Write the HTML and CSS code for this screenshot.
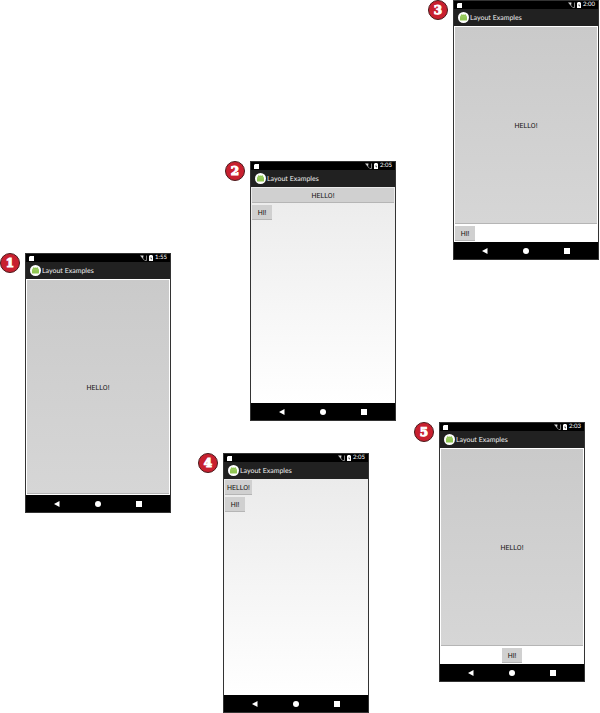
FILE: index.html
```
<!DOCTYPE html>
<html lang="en">
<head>
<meta charset="utf-8">
<title>Layout Examples</title>
<link rel="stylesheet" href="styles.css">
</head>
<body>
<svg class="sprite" aria-hidden="true">
  <symbol id="sd" viewBox="0 0 5 5"><path d="M1 0H5V5H0V1Z" fill="#fff"/></symbol>
  <symbol id="signal" viewBox="0 0 7 6"><path d="M0 .5H3.5L3 3.5Z" fill="#ddd"/><path d="M1 1L4.500 5.500M6.500 .5V5.500H5" fill="none" stroke="#bbb" stroke-width=".7"/></symbol>
  <symbol id="battery" viewBox="0 0 4 6"><path d="M1 0H3V.5H4V6H0V.5H1Z" fill="#fff"/><path d="M2.200 1.500L1.200 3.500H2V5L3 3H2.200Z" fill="#333"/></symbol>
  <symbol id="app" viewBox="0 0 11 11"><circle cx="5.5" cy="5.5" r="5.5" fill="#fff"/><path d="M2 7.700V5.200Q2.200 2.500 5.500 2.500T9 5.200V7.700Q9 8.600 8.200 8.600H2.800Q2 8.600 2 7.700Z" fill="#91c653"/><path d="M3.200 2L4 3.200M7.800 2L7 3.200" stroke="#91c653" stroke-width=".6"/><path d="M2.200 4.800H8.800" stroke="#b4d98a" stroke-width=".4"/></symbol>
  <symbol id="back" viewBox="0 0 6 6"><path d="M0 3L5.500 0V6Z" fill="#fff"/></symbol>
  <symbol id="home" viewBox="0 0 6 6"><circle cx="3" cy="3" r="3" fill="#fff"/></symbol>
  <symbol id="recent" viewBox="0 0 6 6"><path d="M0 0H6V6H0Z" fill="#fff"/></symbol>
</svg>
<main class="board">
  <div class="column column-first">
    <section class="example">
      <span class="badge">1</span>
      <div class="phone">
        <div class="status"><svg class="sd"><use href="#sd"/></svg><svg class="signal"><use href="#signal"/></svg><svg class="battery"><use href="#battery"/></svg><span>1:55</span></div>
        <header class="appbar"><svg class="app"><use href="#app"/></svg><span>Layout Examples</span></header>
        <div class="content"><button class="fill">HELLO!</button></div>
        <nav class="nav"><button aria-label="Back"><svg><use href="#back"/></svg></button><button aria-label="Home"><svg><use href="#home"/></svg></button><button aria-label="Recent"><svg><use href="#recent"/></svg></button></nav>
      </div>
    </section>
  </div>
  <div class="column column-middle">
    <section class="example to-end">
      <span class="badge">2</span>
      <div class="phone">
        <div class="status"><svg class="sd"><use href="#sd"/></svg><svg class="signal"><use href="#signal"/></svg><svg class="battery"><use href="#battery"/></svg><span>2:05</span></div>
        <header class="appbar"><svg class="app"><use href="#app"/></svg><span>Layout Examples</span></header>
        <div class="content shaded"><button class="wide">HELLO!</button><button>HI!</button></div>
        <nav class="nav"><button aria-label="Back"><svg><use href="#back"/></svg></button><button aria-label="Home"><svg><use href="#home"/></svg></button><button aria-label="Recent"><svg><use href="#recent"/></svg></button></nav>
      </div>
    </section>
    <section class="example">
      <span class="badge">4</span>
      <div class="phone">
        <div class="status"><svg class="sd"><use href="#sd"/></svg><svg class="signal"><use href="#signal"/></svg><svg class="battery"><use href="#battery"/></svg><span>2:05</span></div>
        <header class="appbar"><svg class="app"><use href="#app"/></svg><span>Layout Examples</span></header>
        <div class="content shaded"><button>HELLO!</button><button>HI!</button></div>
        <nav class="nav"><button aria-label="Back"><svg><use href="#back"/></svg></button><button aria-label="Home"><svg><use href="#home"/></svg></button><button aria-label="Recent"><svg><use href="#recent"/></svg></button></nav>
      </div>
    </section>
  </div>
  <div class="column column-last">
    <section class="example to-end">
      <span class="badge">3</span>
      <div class="phone">
        <div class="status"><svg class="sd"><use href="#sd"/></svg><svg class="signal"><use href="#signal"/></svg><svg class="battery"><use href="#battery"/></svg><span>2:00</span></div>
        <header class="appbar"><svg class="app"><use href="#app"/></svg><span>Layout Examples</span></header>
        <div class="content"><button class="fill">HELLO!</button><button>HI!</button></div>
        <nav class="nav"><button aria-label="Back"><svg><use href="#back"/></svg></button><button aria-label="Home"><svg><use href="#home"/></svg></button><button aria-label="Recent"><svg><use href="#recent"/></svg></button></nav>
      </div>
    </section>
    <section class="example">
      <span class="badge">5</span>
      <div class="phone">
        <div class="status"><svg class="sd"><use href="#sd"/></svg><svg class="signal"><use href="#signal"/></svg><svg class="battery"><use href="#battery"/></svg><span>2:03</span></div>
        <header class="appbar"><svg class="app"><use href="#app"/></svg><span>Layout Examples</span></header>
        <div class="content"><button class="fill">HELLO!</button><button class="centered">HI!</button></div>
        <nav class="nav"><button aria-label="Back"><svg><use href="#back"/></svg></button><button aria-label="Home"><svg><use href="#home"/></svg></button><button aria-label="Recent"><svg><use href="#recent"/></svg></button></nav>
      </div>
    </section>
  </div>
</main>
</body>
</html>
```
FILE: styles.css
```
* { box-sizing: border-box; }
body {
  margin: 0;
  background: #fff;
  font-family: Lato, Roboto, sans-serif;
  text-rendering: geometricPrecision;
}
svg { display: block; flex: none; }
.sprite { display: none; }

.board { display: grid; grid-template-columns: 198fr 216fr 186fr; align-items: start; }
.column { display: flex; flex-direction: column; gap: 32px; }
.column-first { padding-top: 253px; padding-right: 27px; }
.column-middle { padding-top: 161px; padding-right: 18px; }
.column-last { padding-right: 1px; gap: 162px; }

.example { display: flex; align-items: flex-start; gap: 5px; }
.column-middle .example { margin-right: 27px; }
.column-last .example { margin-right: 14px; }
.column-middle .to-end { margin-right: 0; margin-left: 27px; }
.column-last .to-end { margin-right: 0; margin-left: 14px; }

.badge {
  flex: none;
  width: 20px;
  height: 20px;
  border: 1px solid #4a1a1c;
  border-radius: 50%;
  background: #c8202f;
  color: #fff;
  font: bold 12px/18px "DejaVu Serif", serif;
  text-align: center;
  -webkit-text-stroke: 1px #fff;
}

.phone {
  flex: 1;
  aspect-ratio: 73 / 130;
  display: flex;
  flex-direction: column;
  border: 1px solid #333;
}
.status {
  display: flex;
  align-items: center;
  height: 8px;
  padding: 0 3px;
  background: #000;
  color: #fff;
  font-size: 6px;
  line-height: 8px;
}
.sd { width: 5px; height: 5px; margin-right: auto; }
.signal { width: 7px; height: 6px; margin-right: 2px; }
.battery { width: 4px; height: 6px; margin-right: 2px; }
.appbar {
  display: flex;
  align-items: center;
  gap: 1px;
  height: 17px;
  padding: 0 4px;
  background: #212121;
  color: #eee;
  font-size: 7px;
  line-height: 8px;
}
.app { width: 11px; height: 11px; }

.content {
  flex: 1;
  display: flex;
  flex-direction: column;
  align-items: flex-start;
  gap: 2px;
  padding: 1px;
  background: #fff;
}
.shaded { background: linear-gradient(#ebebeb, #fff); }
.content button {
  min-width: 20px;
  height: 15px;
  padding: 2px 2px 0;
  border: 0;
  border-bottom: 1px solid #b5b5b5;
  background: #d0d0d0;
  color: #111;
  font: 7px/8px Roboto, sans-serif;
}
.content .wide { width: 100%; }
.content .fill { width: 100%; height: auto; flex: 1; background: linear-gradient(#cacaca, #d6d6d6); }
.content .centered { align-self: center; }

.nav {
  display: flex;
  justify-content: center;
  gap: 35px;
  height: 17px;
  background: #000;
}
.nav button { display: flex; align-items: center; padding: 0; border: 0; background: none; }
.nav svg { width: 6px; height: 6px; }
```
